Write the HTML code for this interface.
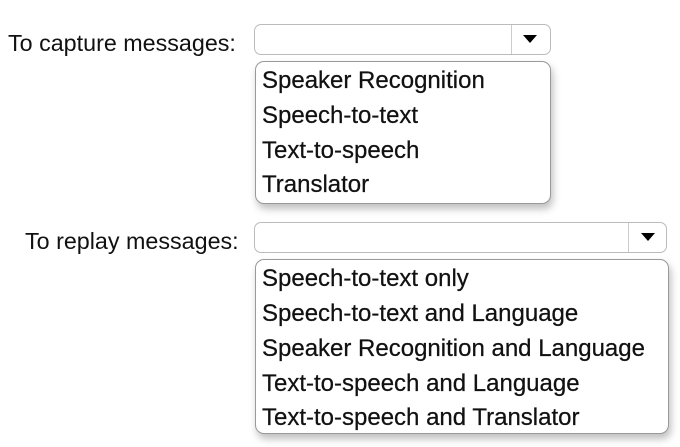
<!DOCTYPE html>
<html><head><style>
body{margin:0;width:680px;height:447px;background:#fff;font-family:"Liberation Sans","DejaVu Sans",sans-serif;position:relative;overflow:hidden;color:#111}
.lbl{position:absolute;font-size:23.3px;white-space:nowrap;line-height:24px}
.dd{position:absolute;border:1.5px solid #bbb;border-radius:7px;background:#fff;box-sizing:border-box}
.dd .div{position:absolute;top:0;bottom:0;border-left:1.5px solid #ccc}
.dd .arr{position:absolute;width:0;height:0;border-left:7px solid transparent;border-right:7px solid transparent;border-top:8px solid #000}
.list{position:absolute;border:1.5px solid #999;border-radius:9px;background:#fff;box-sizing:border-box;box-shadow:2px 5px 8px rgba(0,0,0,.25)}
.it{position:absolute;left:6px;font-size:24px;white-space:nowrap;line-height:26px;-webkit-text-stroke:.25px #111}
</style></head><body>
<div class="lbl" style="left:8px;top:31px">To capture messages:</div>
<div class="dd" style="left:254px;top:24px;width:297px;height:31px"><div class="div" style="left:256px"></div><div class="arr" style="left:268px;top:10px"></div></div>
<div class="list" style="left:255px;top:61px;width:296px;height:143px">
<div class="it" style="top:6px">Speaker Recognition</div>
<div class="it" style="top:41px">Speech-to-text</div>
<div class="it" style="top:76px">Text-to-speech</div>
<div class="it" style="top:110px">Translator</div>
</div>
<div class="lbl" style="left:25px;top:229px">To replay messages:</div>
<div class="dd" style="left:254px;top:222px;width:413px;height:31px"><div class="div" style="left:373px"></div><div class="arr" style="left:386px;top:10px"></div></div>
<div class="list" style="left:255px;top:259px;width:414px;height:175px">
<div class="it" style="top:6px">Speech-to-text only</div>
<div class="it" style="top:41px">Speech-to-text and Language</div>
<div class="it" style="top:76px">Speaker Recognition and Language</div>
<div class="it" style="top:111px">Text-to-speech and Language</div>
<div class="it" style="top:145px">Text-to-speech and Translator</div>
</div>
</body></html>
